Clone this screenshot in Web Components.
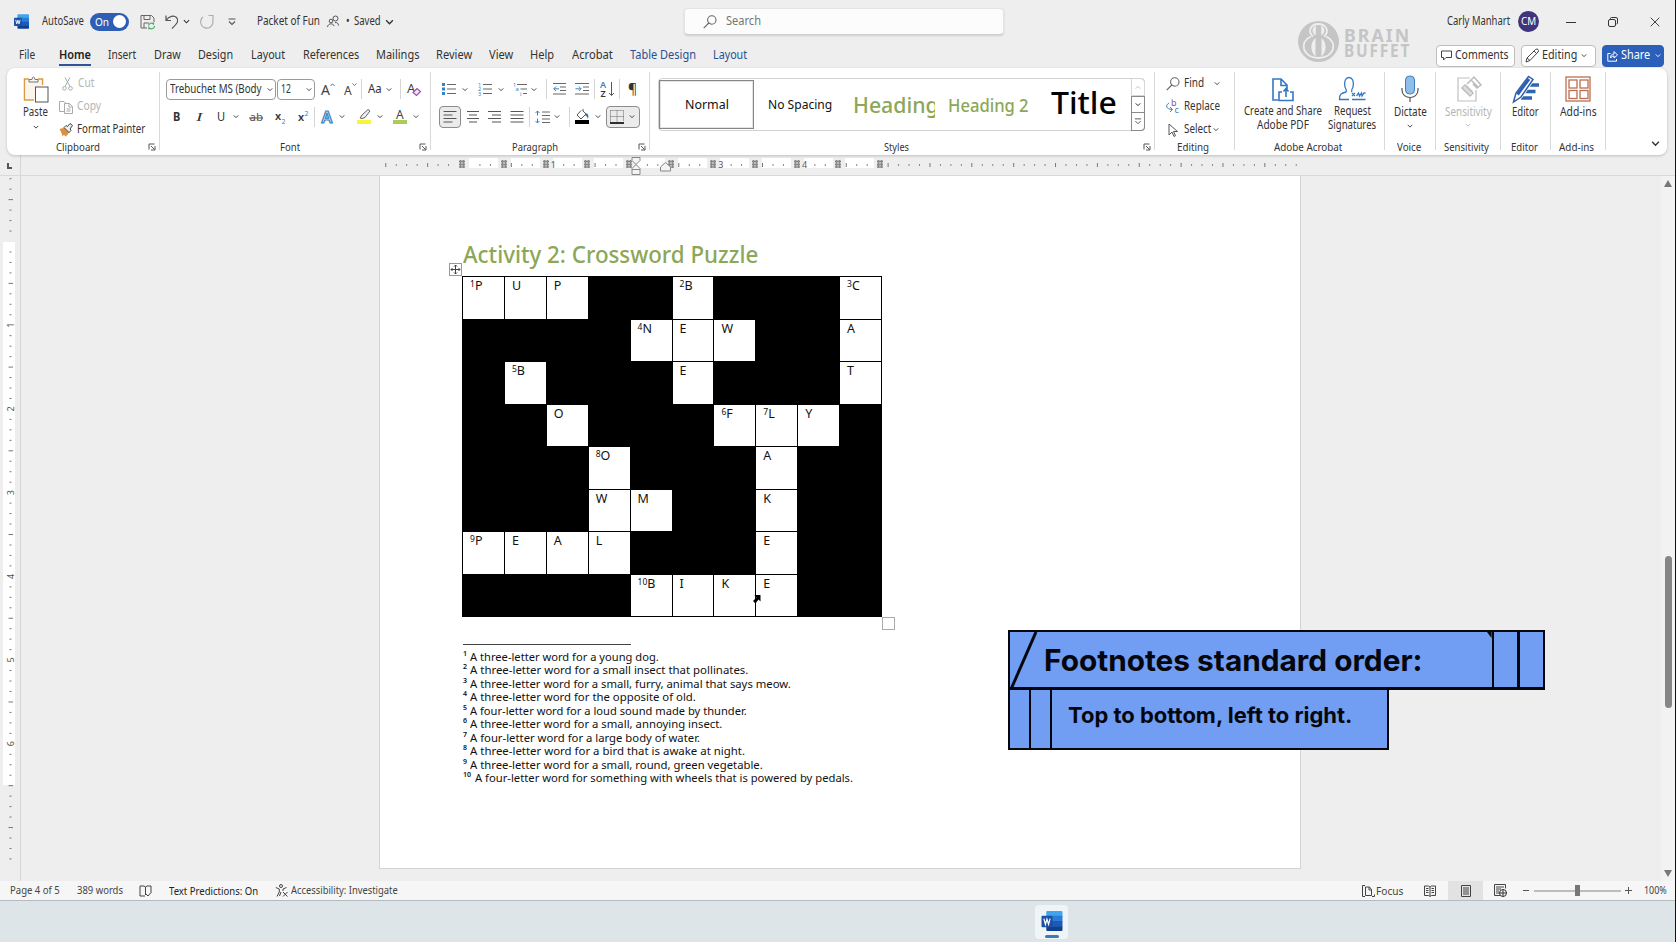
<!DOCTYPE html>
<html lang="en">
  <head>
    <meta charset="UTF-8" />
    <meta name="viewport" content="width=device-width, initial-scale=1.0" />
    <title>Packet of Fun</title>
    <style>
      body {
        margin: 0;
        width: 1676px;
        height: 942px;
        overflow: hidden;
        background: #eeeeee;
        font: 12px/1.2 "Noto Sans", "Open Sans", sans-serif;
        color: #333;
      }
    </style>
  </head>
  <body>
    <word-app></word-app>

    <template id="title-bar">
      <style>
        :host { display: flex; align-items: center; box-sizing: border-box; height: 42px; padding: 1px 0 0 14px; }
        .toggle { display: flex; align-items: center; box-sizing: border-box; width: 39px; height: 18px; margin-left: 6px; padding: 0 3px 0 5px; border-radius: 9px; background: #2f5fb5; color: #fff; justify-content: space-between; }
        .knob { width: 13px; height: 13px; border-radius: 50%; background: #fff; }
        .search { display: flex; align-items: center; box-sizing: border-box; width: 320px; height: 27px; margin-left: 290px; padding-left: 18px; background: #fcfcfc; border: 1px solid #e3e3e3; border-bottom: 1px solid #cfcfcf; border-radius: 4px; box-shadow: 0 1px 2px #0002; color: #767676; }
        .avatar { display: flex; align-items: center; justify-content: center; width: 21px; height: 21px; margin-left: 8px; border-radius: 50%; background: #40357c; color: #fff; }
      </style>
      <ui-icon name="word" w="15" h="15"></ui-icon>
      <fit-text g="13" w="42">AutoSave</fit-text>
      <div class="toggle"><fit-text w="14" size="11.5">On</fit-text><div class="knob"></div></div>
      <ui-icon g="11" name="save" w="15" h="16"></ui-icon>
      <ui-icon g="10" name="undo" w="14" h="16"></ui-icon>
      <ui-icon g="4" name="chev" w="7" h="5"></ui-icon>
      <ui-icon g="9" name="redo" w="15" h="16"></ui-icon>
      <ui-icon g="14" name="more" w="8" h="8"></ui-icon>
      <fit-text g="21" w="63">Packet of Fun</fit-text>
      <ui-icon g="7" name="people" w="12" h="13"></ui-icon>
      <fit-text g="7" w="4">•</fit-text>
      <fit-text g="4" w="27">Saved</fit-text>
      <ui-icon g="4" name="chev" w="9" h="6"></ui-icon>
      <div class="search"><ui-icon name="search" w="14" h="14"></ui-icon><fit-text g="9" w="35">Search</fit-text></div>
      <fit-text g="443" w="63">Carly Manhart</fit-text>
      <div class="avatar"><fit-text w="15" size="10.5">CM</fit-text></div>
      <ui-icon g="27" name="min" w="10" h="10"></ui-icon>
      <ui-icon g="32" name="restore" w="10" h="10"></ui-icon>
      <ui-icon g="32" name="close" w="10" h="10"></ui-icon>
    </template>

    <template id="brand-mark">
      <style>
        :host { display: flex; align-items: center; position: absolute; left: 1298px; top: 21px; color: #c5c5c5; }
        div { margin: 3px 0 0 5px; font-weight: 700; }
      </style>
      <ui-icon name="brain" w="41" h="41"></ui-icon>
      <div>
        <fit-text w="67" h="16" size="17.5" space="2">BRAIN</fit-text>
        <fit-text w="67" h="16" size="17" space="2">BUFFET</fit-text>
      </div>
    </template>

    <template id="tab-bar">
      <style>
        :host { display: flex; align-items: center; box-sizing: border-box; height: 26px; padding: 1px 0 0 19px; }
        .home { font-weight: 600; border-bottom: 2px solid #2f5597; margin: 3px 0 0 24px; padding-bottom: 1px; color: #222; }
        .blue { color: #2b4f8f; }
        .btn { display: flex; align-items: center; box-sizing: border-box; height: 22px; background: #fff; border: 1px solid #bdbdbd; border-radius: 4px; }
        .share { background: #2c5fb9; border-color: #2c5fb9; color: #fff; }
      </style>
      <fit-text w="16">File</fit-text>
      <div class="home"><fit-text w="32">Home</fit-text></div>
      <fit-text g="17" w="28">Insert</fit-text>
      <fit-text g="18" w="27">Draw</fit-text>
      <fit-text g="17" w="35">Design</fit-text>
      <fit-text g="18" w="34">Layout</fit-text>
      <fit-text g="18" w="56">References</fit-text>
      <fit-text g="17" w="43">Mailings</fit-text>
      <fit-text g="17" w="36">Review</fit-text>
      <fit-text g="17" w="24">View</fit-text>
      <fit-text g="17" w="24">Help</fit-text>
      <fit-text g="18" w="41">Acrobat</fit-text>
      <fit-text class="blue" g="17" w="66">Table Design</fit-text>
      <fit-text class="blue" g="17" w="34">Layout</fit-text>
      <div class="btn" style="width: 79px; margin-left: 689px; padding-left: 4px"><ui-icon name="comment" w="11" h="11"></ui-icon><fit-text g="3" w="54">Comments</fit-text></div>
      <div class="btn" style="width: 75px; margin-left: 6px; padding-left: 3px"><ui-icon name="pencil" w="14" h="15"></ui-icon><fit-text g="3" w="35">Editing</fit-text><ui-icon g="4" name="chev" w="6" h="5"></ui-icon></div>
      <div class="btn share" style="width: 62px; margin-left: 6px; padding-left: 4px"><ui-icon name="share" w="11" h="12"></ui-icon><fit-text g="3" w="29">Share</fit-text><ui-icon g="5" name="chev" w="6" h="5"></ui-icon></div>
    </template>

    <template id="ribbon-group">
      <style>
        :host { display: block; box-sizing: border-box; flex: none; height: 78px; margin-top: 4px; border-right: 1px solid #d9d9d9; }
        .body { display: flow-root; height: 71px; }
        .foot { display: flex; align-items: center; height: 8px; padding-right: 3px; }
        .label { flex: 1; display: flex; justify-content: center; }
      </style>
      <div class="body"><slot></slot></div>
      <div class="foot"><div class="label"></div></div>
    </template>

    <template id="ribbon-bar">
      <style>
        :host { display: flex; box-sizing: border-box; height: 87px; margin: 0 8px 0 7px; background: #fff; border-radius: 8px; box-shadow: 0 1px 3px #0003; position: relative; }
        .row { display: flex; align-items: center; }
        .col { display: flex; flex-direction: column; align-items: center; }
        .rows { padding-top: 6px; display: grid; grid-template-rows: 22px 22px; gap: 6px; }
        .dis { color: #b5b5b5; }
        .sep { width: 1px; height: 20px; background: #d5d5d5; }
        .combo { display: flex; align-items: center; box-sizing: border-box; height: 21px; border: 1px solid #9a9a9a; border-radius: 4px; padding-left: 3px; }
        .on { display: flex; align-items: center; box-sizing: border-box; height: 22px; background: #ebebeb; border: 1px solid #8c8c8c; border-radius: 4px; padding-left: 3px; }
        .gallery { display: flex; align-items: center; box-sizing: border-box; height: 53px; width: 487px; margin: 6px 0 0 8px; border: 1px solid #d2d2d2; border-radius: 4px; color: #111; }
        .cell { display: flex; align-items: center; justify-content: center; box-sizing: border-box; height: 49px; width: 95px; border: 1.5px solid #868686; box-shadow: inset 0 0 0 1px #e4e4e4; }
        .green { color: #8ca757; font-weight: 500; }
        .clip { overflow: hidden; }
        .spin { display: grid; grid-template-rows: 18px 17px 18px; width: 14px; margin: -1px -1px -1px auto; }
        .spin div { display: flex; align-items: center; justify-content: center; box-sizing: border-box; border: 1px solid #8a8a8a; }
        .spin div:first-child { border: 1px solid #d6d6d6; color: #bbb; border-radius: 0 4px 0 0; }
        .spin div:last-child { border-radius: 0 0 4px 0; border-top: 0; }
      </style>
      <ribbon-group label="Clipboard" lw="44" width="153" launcher>
        <div class="row" style="align-items: flex-start">
          <div class="col" style="margin: 4px 0 0 15px; width: 27px"><ui-icon name="paste" w="26" h="27"></ui-icon><fit-text w="25" h="18">Paste</fit-text><ui-icon name="chev" w="6" h="12"></ui-icon></div>
          <div style="display: grid; grid-template-rows: repeat(3, 23px); margin-left: 10px">
            <div class="row dis"><ui-icon name="cut" g="3" w="11" h="14"></ui-icon><fit-text g="5" w="16">Cut</fit-text></div>
            <div class="row dis"><ui-icon name="copy" w="14" h="14"></ui-icon><fit-text g="4" w="24">Copy</fit-text></div>
            <div class="row"><ui-icon name="brush" w="14" h="14"></ui-icon><fit-text g="4" w="68">Format Painter</fit-text></div>
          </div>
        </div>
      </ribbon-group>
      <ribbon-group label="Font" lw="20" width="271" launcher>
        <div class="rows">
          <div class="row" style="padding-left: 6px">
            <div class="combo" style="width: 110px"><fit-text w="92">Trebuchet MS (Body</fit-text><ui-icon g="5" name="chev" w="6" h="5"></ui-icon></div>
            <div class="combo" style="width: 38px; margin-left: 1px"><fit-text w="10">12</fit-text><ui-icon g="15" name="chev" w="6" h="5"></ui-icon></div>
            <ui-icon g="6" name="grow" w="14" h="14"></ui-icon>
            <ui-icon g="9" name="shrink" w="13" h="14"></ui-icon>
            <div class="sep" style="margin-left: 4px"></div>
            <fit-text g="6" w="14" size="13">Aa</fit-text>
            <ui-icon g="4" name="chev" w="6" h="5"></ui-icon>
            <div class="sep" style="margin-left: 8px"></div>
            <ui-icon g="6" name="clear" w="14" h="14"></ui-icon>
          </div>
          <div class="row" style="padding-left: 13px; margin-top: -1px">
            <fit-text w="7" size="12.5" style="font-weight: 700">B</fit-text>
            <fit-text g="16" w="6" size="13" style="font-style: italic; font-family: 'Liberation Serif', serif">I</fit-text>
            <fit-text g="15" w="8" size="12.5" style="text-decoration: underline">U</fit-text>
            <ui-icon g="8" name="chev" w="6" h="5"></ui-icon>
            <ui-icon g="10" name="strike" w="14" h="14"></ui-icon>
            <ui-icon g="12" name="sub" w="11" h="14"></ui-icon>
            <ui-icon g="12" name="sup" w="11" h="14"></ui-icon>
            <div class="sep" style="margin-left: 5px"></div>
            <ui-icon g="5" name="outlineA" w="14" h="14"></ui-icon>
            <ui-icon g="5" name="chev" w="6" h="5"></ui-icon>
            <ui-icon g="11" name="marker" w="16" h="15"></ui-icon>
            <ui-icon g="5" name="chev" w="6" h="5"></ui-icon>
            <ui-icon g="10" name="fontA" w="14" h="15"></ui-icon>
            <ui-icon g="6" name="chev" w="6" h="5"></ui-icon>
          </div>
        </div>
      </ribbon-group>
      <ribbon-group label="Paragraph" lw="46" width="219" launcher>
        <div class="rows">
          <div class="row" style="padding-left: 11px">
            <ui-icon name="bullets" w="14" h="14"></ui-icon><ui-icon g="6" name="chev" w="6" h="5"></ui-icon>
            <ui-icon g="10" name="numbers" w="14" h="14"></ui-icon><ui-icon g="6" name="chev" w="6" h="5"></ui-icon>
            <ui-icon g="9" name="multi" w="14" h="14"></ui-icon><ui-icon g="4" name="chev" w="6" h="5"></ui-icon>
            <div class="sep" style="margin-left: 9px"></div>
            <ui-icon g="6" name="outdent" w="13" h="14"></ui-icon>
            <ui-icon g="9" name="indent" w="14" h="14"></ui-icon>
            <div class="sep" style="margin-left: 5px"></div>
            <ui-icon g="5" name="sort" w="15" h="16"></ui-icon>
            <div class="sep" style="margin-left: 4px"></div>
            <fit-text g="8" w="9" size="14">¶</fit-text>
          </div>
          <div class="row" style="padding-left: 8px; margin-top: -1px">
            <div class="on" style="width: 22px"><ui-icon name="left" w="14" h="14"></ui-icon></div>
            <ui-icon g="5" name="center" w="14" h="14"></ui-icon>
            <ui-icon g="8" name="right" w="14" h="14"></ui-icon>
            <ui-icon g="8" name="justify" w="14" h="14"></ui-icon>
            <div class="sep" style="margin-left: 5px"></div>
            <ui-icon g="5" name="spacing" w="15" h="14"></ui-icon>
            <ui-icon g="4" name="chev" w="6" h="5"></ui-icon>
            <div class="sep" style="margin-left: 9px"></div>
            <ui-icon g="5" name="bucket" w="15" h="15"></ui-icon>
            <ui-icon g="5" name="chev" w="6" h="5"></ui-icon>
            <div class="on" style="width: 34px; margin-left: 5px"><ui-icon name="borders" w="14" h="14"></ui-icon><ui-icon g="5" name="chev" w="6" h="5"></ui-icon></div>
          </div>
        </div>
      </ribbon-group>
      <ribbon-group label="Styles" lw="25" width="505" launcher>
        <div class="gallery">
          <div class="cell"><fit-text w="44" size="13">Normal</fit-text></div>
          <fit-text g="14" w="64" size="13">No Spacing</fit-text>
          <div class="green clip" style="width: 82px; margin-left: 21px"><fit-text w="86" h="32" size="22.5">Heading</fit-text></div>
          <fit-text class="green" g="13" w="81" h="30" size="18">Heading 2</fit-text>
          <fit-text g="22" w="66" size="31.5" style="color: #000; font-weight: 500; margin-top: -5px">Title</fit-text>
          <div class="spin"><div><ui-icon name="up" w="6" h="5"></ui-icon></div><div><ui-icon name="chev" w="6" h="5"></ui-icon></div><div><ui-icon name="more" w="8" h="7"></ui-icon></div></div>
        </div>
      </ribbon-group>
      <ribbon-group label="Editing" lw="32" width="80">
        <div style="display: grid; grid-template-rows: repeat(3, 23px); padding-left: 11px">
          <div class="row"><ui-icon name="search" w="14" h="14"></ui-icon><fit-text g="4" w="20">Find</fit-text><ui-icon g="10" name="chev" w="6" h="5"></ui-icon></div>
          <div class="row"><ui-icon name="replace" w="14" h="15"></ui-icon><fit-text g="4" w="36">Replace</fit-text></div>
          <div class="row"><ui-icon name="select" w="14" h="14"></ui-icon><fit-text g="4" w="27">Select</fit-text><ui-icon g="2" name="chev" w="6" h="5"></ui-icon></div>
        </div>
      </ribbon-group>
      <ribbon-group label="Adobe Acrobat" lw="68" width="150">
        <div class="row" style="align-items: flex-start; padding: 3px 0 0 9px">
          <div class="col"><ui-icon name="pdf" w="28" h="29"></ui-icon><fit-text w="78" h="14">Create and Share</fit-text><fit-text w="52" h="14">Adobe PDF</fit-text></div>
          <div class="col" style="margin-left: 6px"><ui-icon name="sign" w="28" h="29"></ui-icon><fit-text w="37" h="14">Request</fit-text><fit-text w="48" h="14">Signatures</fit-text></div>
        </div>
      </ribbon-group>
      <ribbon-group label="Voice" lw="24" width="51">
        <div class="col" style="padding-top: 3px"><ui-icon name="mic" w="28" h="29"></ui-icon><fit-text w="33" h="16">Dictate</fit-text><ui-icon name="chev" w="6" h="12"></ui-icon></div>
      </ribbon-group>
      <ribbon-group label="Sensitivity" lw="45" width="65">
        <div class="col dis" style="padding-top: 3px"><ui-icon name="sens" w="28" h="29"></ui-icon><fit-text w="47" h="15">Sensitivity</fit-text><ui-icon name="chev" w="6" h="12"></ui-icon></div>
      </ribbon-group>
      <ribbon-group label="Editor" lw="27" width="50">
        <div class="col" style="padding-top: 3px"><ui-icon name="editor" w="28" h="29"></ui-icon><fit-text w="27" h="15">Editor</fit-text></div>
      </ribbon-group>
      <ribbon-group label="Add-ins" lw="35" width="55">
        <div class="col" style="padding-top: 3px"><ui-icon name="addins" w="28" h="29"></ui-icon><fit-text w="37" h="15">Add-ins</fit-text></div>
      </ribbon-group>
      <ui-icon name="chev" w="9" h="7" style="margin: 72px 0 0 45px"></ui-icon>
    </template>

    <template id="doc-page">
      <style>
        :host { display: block; box-sizing: border-box; width: 922px; height: 693px; margin-left: 358px; padding: 61px 0 0 82px; background: #fff; border: 1px solid #d4d4d4; border-top: 0; position: relative; color: #111; }
        .title { margin-left: 1px; color: #8ca757; font-weight: 500; }
        .end { width: 11px; height: 11px; margin-left: 420px; border: 1px solid #ababab; background: #fff; }
        .rule { width: 168px; height: 1px; margin: 14px 0 5px 1px; background: #444; }
        .move { position: absolute; left: 69px; top: 87px; }
        .pointer { position: absolute; left: 372px; top: 418px; }
      </style>
      <fit-text class="title" w="295" h="34" size="23">Activity 2: Crossword Puzzle</fit-text>
      <ui-icon class="move" name="move" w="13" h="13"></ui-icon>
      <cross-word></cross-word>
      <div class="end"></div>
      <div class="rule"></div>
      <foot-notes></foot-notes>
      <ui-icon class="pointer" name="pointer" w="9" h="10"></ui-icon>
    </template>

    <template id="callout-banner">
      <style>
        :host { display: block; position: absolute; left: 1008px; top: 630px; color: #05070d; font-family: Inter, sans-serif; }
        .top, .bottom { display: flex; box-sizing: border-box; background: #719df2; border: 2px solid #05070d; }
        .top { width: 537px; height: 60px; border-bottom-width: 3px; }
        .bottom { width: 381px; height: 60px; border-top: 0; }
        .top fit-text { font-weight: 700; width: 443px; padding-top: 11px; }
        .bottom fit-text { font-weight: 700; padding: 12px 0 0 16px; }
        .bar { box-sizing: border-box; border-left: 2px solid #05070d; width: 28px; }
        .bar:last-child { border-left-width: 3px; }
        .bottom .thin { border-left: 0; border-right: 2px solid #05070d; width: 21px; }
        .corner { width: 5px; height: 6px; background: #05070d; clip-path: polygon(0 0, 100% 0, 100% 100%); }
      </style>
      <div class="top">
        <ui-icon name="slash" w="30" h="55"></ui-icon>
        <fit-text g="4" w="378" h="34" size="29.5">Footnotes standard order:</fit-text>
        <div class="corner"></div>
        <div class="bar"></div><div class="bar"></div>
      </div>
      <div class="bottom"><div class="bar thin"></div><div class="bar thin"></div><fit-text w="284" h="27" size="21.5">Top to bottom, left to right.</fit-text></div>
    </template>

    <template id="scroll-bar">
      <style>
        :host { display: flex; flex-direction: column; align-items: center; width: 14px; height: 100%; margin-left: auto; background: #f2f2f2; color: #777; }
        .thumb { width: 7px; height: 152px; margin-top: 369px; border-radius: 4px; background: #868686; }
      </style>
      <ui-icon name="triUp" w="8" h="7" style="margin-top: 4px"></ui-icon>
      <div class="thumb"></div>
      <ui-icon name="triDown" w="8" h="7" style="margin-top: 162px"></ui-icon>
    </template>

    <template id="status-bar">
      <style>
        :host { display: flex; align-items: center; height: 19px; padding-left: 10px; background: #f6f6f6; border-bottom: 1px solid #b4bcc0; font-size: 10.5px; color: #444; }
        .view { display: flex; align-items: center; justify-content: center; height: 19px; width: 35px; background: #e2e2e2; margin-left: 12px; }
        .track { display: flex; align-items: center; justify-content: center; width: 87px; height: 2px; background: #bdbdbd; margin: 0 4px 0 5px; }
        .knob { flex: none; width: 5px; height: 11px; background: #777; }
      </style>
      <fit-text w="50">Page 4 of 5</fit-text>
      <fit-text g="17" w="46">389 words</fit-text>
      <ui-icon g="16" name="proof" w="13" h="12"></ui-icon>
      <fit-text g="17" w="89" style="padding-top: 1px; color: #222">Text Predictions: On</fit-text>
      <ui-icon g="17" name="access" w="13" h="13"></ui-icon>
      <fit-text g="3" w="107">Accessibility: Investigate</fit-text>
      <ui-icon g="964" name="focus" w="13" h="12"></ui-icon>
      <fit-text g="1" w="27" style="padding-top: 1px">Focus</fit-text>
      <ui-icon g="21" name="read" w="12" h="12"></ui-icon>
      <div class="view"><ui-icon name="print" w="10" h="12"></ui-icon></div>
      <ui-icon g="11" name="web" w="13" h="13"></ui-icon>
      <ui-icon g="16" name="minus" w="6" h="7"></ui-icon>
      <div class="track"><div class="knob"></div></div>
      <ui-icon name="plus" w="7" h="7"></ui-icon>
      <fit-text g="12" w="23" >100%</fit-text>
    </template>

    <template id="task-bar">
      <style>
        :host { display: flex; height: 41px; background: #dde5e9; }
        .app { display: flex; flex-direction: column; align-items: center; box-sizing: border-box; width: 33px; height: 34px; margin: 4px 0 0 1035px; padding-top: 6px; border-radius: 4px; background: #eff4f7; }
        .mark { width: 14px; height: 3px; margin-top: 4px; border-radius: 2px; background: #3d7ab5; }
      </style>
      <div class="app"><ui-icon name="word" w="22" h="20"></ui-icon><div class="mark"></div></div>
    </template>

    <template id="word-app">
      <style>
        :host { display: block; box-sizing: border-box; width: 1676px; height: 942px; border-right: 1px solid #111; position: relative; }
        .work { display: flex; height: 706px; border-top: 1px solid #d9d9d9; box-sizing: border-box; }
        h-ruler { height: 20px; }
      </style>
      <title-bar></title-bar>
      <tab-bar></tab-bar>
      <ribbon-bar></ribbon-bar>
      <h-ruler></h-ruler>
      <div class="work">
        <v-ruler></v-ruler>
        <doc-page></doc-page>
        <scroll-bar></scroll-bar>
      </div>
      <status-bar></status-bar>
      <task-bar></task-bar>
      <brand-mark></brand-mark>
      <callout-banner></callout-banner>
    </template>

    <script>
      const line = (d, color = "#555", width = 1) =>
        `<path d="${d}" fill="none" stroke="${color}" stroke-width="${width}"/>`;
      const fill = (d, color) => `<path d="${d}" fill="${color}"/>`;
      const glyph = (x, y, size, color, text, extra = "") =>
        `<text x="${x}" y="${y}" font-size="${size}" fill="${color}" ${extra}>${text}</text>`;
      const blue = "#3b83c0";

      // name: [viewBox width, viewBox height, markup]
      const icons = {
        word: [22, 21, fill("M6 0h15a1 1 0 0 1 1 1v5H5V1a1 1 0 0 1 1-1z", "#41a5ee") + fill("M5 5h17v6H5z", "#2b7cd3") + fill("M5 10.500h17v6H5z", "#185abd") + fill("M5 16h17v4a1 1 0 0 1-1 1H6a1 1 0 0 1-1-1z", "#103f91") + fill("M1 5h9.500a1 1 0 0 1 1 1v10a1 1 0 0 1-1 1H1a1 1 0 0 1-1-1V6a1 1 0 0 1 1-1z", "#1d4fa5") + line("M2.500 8l1.600 6L5.700 8.500 7.400 14 9 8", "#fff", 1.3)],
        chev: [8, 5, line("M1 1l3 3 3-3", "currentColor", 1.2)],
        up: [8, 5, line("M1 4l3-3 3 3", "currentColor", 1.2)],
        more: [8, 8, line("M.5 1h7M1 3.500l3 3 3-3", "#555", 1.1)],
        save: [15, 16, line("M1 1.500h10.500L14 4v4M1 1.500V14h6M4 1.500v4h6v-4M4 14V9h5", "#666") + line("M8.500 11.500a3 3 0 0 1 5-1.500V8.500M14.500 12a3 3 0 0 1-5.500 1.500V15.500", "#4fa868", 1.2)],
        undo: [14, 16, line("M1 1.500V6.500H6M1 6.500C4 2 9 1 11.500 3.500S13 9 7 14.500", "#555", 1.2)],
        redo: [15, 16, line("M9.500 1.500H14V6M13.500 5.500A6.200 6.200 0 1 1 4 3", "#aaa", 1.1)],
        people: [12, 13, `<circle cx="8.500" cy="3.500" r="2.500" fill="none" stroke="#555"/><circle cx="4" cy="6" r="1.800" fill="none" stroke="#555"/>` + line("M.5 12c.5-4 6-4 6.500-1M8 7.500c2.500 0 3.500 1 3.500 3", "#555")],
        search: [14, 14, `<circle cx="8.800" cy="5" r="4.200" fill="none" stroke="#666" stroke-width="1.100"/>` + line("M5.800 8L.7 13.200", "#666", 1.1)],
        min: [10, 10, line("M0 5.500h10", "#333")],
        restore: [10, 10, `<rect x=".5" y="2.500" width="7" height="7" rx="1.500" fill="none" stroke="#333"/>` + line("M2.500 2V1.500q0-1 1-1H8q1.500 0 1.500 1.500v4q0 1-1 1", "#333")],
        close: [10, 10, line("M.7.7l8.600 8.600M9.300.7L.7 9.300", "#444")],
        brain: [41, 41, `<circle cx="20.500" cy="20.500" r="20.500" fill="#c5c5c5"/><g fill="none" stroke="#eee" stroke-width="1.800"><path d="M13 15.500C7 18 4.500 23 6 28c2 6 8 9 14.500 9s12.500-3 14.500-9c1.500-5-1-10-7-12.500"/><path d="M15 15.500C9 10 13 3 20.500 3S32 10 26 15.500"/></g><path d="M17.500 17C12 21 12 31 17.500 35.500zM23.500 17C29 21 29 31 23.500 35.500zM17.800 4.500C13.500 7 13.500 12 17.800 14.500zM23.200 4.500C27.500 7 27.500 12 23.200 14.500z" fill="#eee"/>`],
        comment: [11, 11, line("M.5 1h10v6.500H5L2.500 10V7.500h-2z", "#444")],
        pencil: [14, 15, line("M1 14l1-4L10.500 1.500q1.500-1 2.500 0t0 2.500L5 12.500zM9 3l3 3M2 10l3 2.500", "#444")],
        share: [11, 12, line("M3.500 3.500H.8V11.200H9.500V9M3.500 8C3.500 5 5 4 7 4V1.500L10.500 5 7 8V6C5.500 6 4.500 6.500 3.500 8z", "#fff", 1)],
        launch: [8, 8, line("M1 6.500V1h5.500M3 3l3.500 3.500M7 3v4H3", "#555")],
        paste: [26, 27, line("M6 3H1.500v21H11", "#d99b45", 1.5) + line("M15 3h4.500v6", "#d99b45", 1.500) + fill("M2.500 4h16v7h-6v12h-10z", "#fbf5ea") + `<path d="M6 6V3.500h3Q9.200 1 10.500 1T12 3.500h3V6z" fill="#f5f5f5" stroke="#777"/><rect x="12.500" y="11" width="12.500" height="15" fill="#fff" stroke="#555"/>`],
        cut: [11, 14, line("M3 .5L8 9.500M8 .5L3 9.500", "#aaa") + `<circle cx="2.500" cy="11.300" r="1.800" fill="none" stroke="#aaa"/><circle cx="8.500" cy="11.300" r="1.800" fill="none" stroke="#aaa"/>`],
        copy: [14, 14, line("M5 11.500H.5V1.500H5l2 2M5.500 3.500h5l3 3v7h-8zM10 3.500V7h3.500M7.500 9h4M7.500 11h4", "#aaa")],
        brush: [14, 14, fill("M.5 6L6 4.500l4.500 4.500-3.500 4.500-2-1.500-1.500 1L2.500 10z", "#e0903c") + `<path d="M5 4.500L7 2.500 8.500 3.500 11 .5 13.500 2.500 11 6l1.200 1.200L10 9.500z" fill="#eee" stroke="#444"/>`],
        grow: [14, 14, glyph(0, 13, 14, "#444", "A") + line("M9.500 4L11.500 1.800 13.500 4", blue)],
        shrink: [13, 14, glyph(0, 13, 12, "#444", "A") + line("M8.500 1.500l2 2 2-2", blue)],
        clear: [14, 14, glyph(0, 11, 13, "#444", "A") + `<path d="M6 10.500l4-4 3.500 3-4 4z" fill="#f3e3f6" stroke="#9b4fae" stroke-width="1.200"/>`],
        strike: [14, 14, glyph(.5, 11, 11.5, "#555", "ab") + line("M0 8h14", "#555")],
        sub: [11, 14, glyph(0, 10, 11, "#333", "x", 'font-weight="600"') + glyph(6.500, 13.500, 7, blue, "2")],
        sup: [11, 14, glyph(0, 11, 11, "#333", "x", 'font-weight="600"') + glyph(6.500, 6, 7, blue, "2")],
        outlineA: [14, 14, glyph(1.500, 13, 16, "#d8eaf8", "A", `stroke="${blue}" stroke-width="1.200" font-weight="600"`)],
        marker: [16, 15, fill("M1 11h14v4H1z", "#f8f43c") + `<path d="M4 9l2-3 6-5.500 2 1.500-5 6.500-3 1z" fill="#eee" stroke="#666"/>`],
        fontA: [14, 15, glyph(3, 9.500, 12, "#444", "A") + fill("M0 11h14v4H0z", "#a9cc5b")],
        bullets: [14, 14, fill("M0 1h3v3H0zM0 5.500h3v3H0zM0 10h3v3H0z", blue) + line("M5 2.500h9M5 7h9M5 11.500h9", "#666")],
        numbers: [14, 14, glyph(0, 4.500, 5.500, blue, "1") + glyph(0, 9.200, 5.500, blue, "2") + glyph(0, 14, 5.500, blue, "3") + line("M5 2.500h9M5 7h9M5 11.500h9", "#666")],
        multi: [14, 14, glyph(0, 4.500, 5.500, blue, "1") + glyph(2.500, 9.200, 6, blue, "a") + glyph(7, 14, 6, blue, "i") + line("M4 2.500h10M7.500 7H14M10 11.500h4", "#666")],
        outdent: [13, 14, line("M0 1.500h13M7 5h6M7 8.500h6M0 12h13", "#666") + line("M6 6.800H.8M3 4.500L.8 6.800 3 9", blue)],
        indent: [14, 14, line("M0 1.500h14M8 5h6M8 8.500h6M0 12h14", "#666") + line("M.5 6.800h5.500M3.800 4.500L6 6.800 3.800 9", blue)],
        sort: [15, 16, glyph(0, 7, 9, blue, "A", 'font-weight="600"') + glyph(.5, 15.500, 9, "#333", "Z", 'font-weight="600"') + line("M11.500 1v13.500M9 12l2.500 2.500L14 12", "#555")],
        left: [14, 14, line("M.5 1.500h13M.5 5h9M.5 8.500h13M.5 12h9", "#555")],
        center: [14, 14, line("M1 1.500h12M3 5h8M1 8.500h12M3 12h8", "#555")],
        right: [14, 14, line("M0 1.500h13M4 5h9M0 8.500h13M4 12h9", "#555")],
        justify: [14, 14, line("M.5 1.500h13M.5 5h13M.5 8.500h13M.5 12h13", "#555")],
        spacing: [15, 14, line("M7 2h8M7 5.500h8M7 9h8M7 12.500h8", "#666") + line("M2.500 1v4.500M.5 3l2-2 2 2M2.500 8.500V13M.5 11l2 2 2-2", blue)],
        bucket: [15, 15, fill("M0 11h14v4H0z", "#000") + line("M6 1.500L2 6l4 4 5-5-3-3V0", "#555") + fill("M10 4q4.500 0 3 6-.800-3-3-4z", "#2f6fa8")],
        borders: [14, 14, `<path d="M.5.5h13v11M.5.5v11M7 .5v11M.5 6.500h13" fill="none" stroke="#666" stroke-dasharray="1 1"/>` + line("M0 13h14", "#000", 1.6)],
        replace: [14, 15, glyph(5, 7, 9, "#8d52a8", "b") + glyph(8.500, 14, 9, blue, "c") + line("M3 4C-.5 6-.5 10 6 10.500M4 8l2.500 2.500L4 13", blue)],
        select: [14, 14, line("M3 1v11l3-3 2 4.500 1.500-.8-2-4.200h4z", "#555")],
        pdf: [28, 29, line("M9 25H4V4h8l6 6v4M12 4v6.500h6M13 17h-3v8.500h14V17h-3M17 22v-8M14.500 16.500L17 13.500l2.500 3", "#3478c4", 1.6)],
        sign: [28, 29, line("M11 24.500H1.500C1 19 4 18 8 17c1-1 0-3-1-5C5.500 6 8 2.500 11 2.500S16.500 6 15 12c-1 2-2 4-1 5M14 24.500h13.500M14 18l3 3M17 18l-3 3M18.500 21l2-3 1 3 2-3 .5 3 2-3h1.500", "#3478c4", 1.3)],
        mic: [28, 29, `<rect x="9.500" y="1" width="9" height="18" rx="4" fill="#8fbfe8" stroke="#3d7fbd"/>` + line("M6 13v2c0 10 16 10 16 0v-2M14 22.500V27", "#555", 1.2)],
        sens: [28, 29, line("M16 3H4v23h18V15", "#c0c0c0", 1.2) + fill("M8 14l5-4 6 6-4 4z", "#ddd") + line("M8 13l3-3 8 8-3 3zM13 9L20 2l7 8-4 3-4-4M17 5l7 7", "#bcbcbc", 1.5)],
        editor: [28, 29, line("M13 10h14M11 16.500h12.500M9 23h11", "#2f65b5", 3.5) + `<path d="M1.500 27l2.500-9L16.500 1.500l4.500 3L9 22z" fill="#fff" stroke="#fff" stroke-width="3"/><path d="M1.500 27l2.500-9L16.500 1.500l4.500 3L9 22z" fill="#fff" stroke="#2f5fae" stroke-width="1.500"/>` + line("M17 4L5.500 19.500", "#2f5fae", 3)],
        addins: [28, 29, `<g fill="none" stroke="#bb6f52" stroke-width="1.300"><rect x="2" y="2" width="24" height="24"/><rect x="5" y="5" width="8" height="8"/><rect x="16" y="5" width="8" height="8"/><rect x="5" y="15.500" width="8" height="8"/><rect x="16" y="15.500" width="8" height="8"/></g>`],
        move: [13, 13, `<rect x=".5" y=".5" width="12" height="12" fill="#fff" stroke="#999"/>` + line("M6.500 2v9M2 6.500h9M5 3.500L6.500 2 8 3.500M5 9.500L6.500 11 8 9.500M3.500 5L2 6.500 3.500 8M9.500 5L11 6.500 9.500 8", "#444")],
        pointer: [9, 10, fill("M2.500 1H8.500V7.500L6.500 5.500 3.500 9.500 1 7 4.500 3.500z", "#000")],
        slash: [30, 55, line("M1.500 56L26 0", "#05070d", 3)],
        triUp: [8, 7, fill("M4 0l4 7H0z", "#777")],
        triDown: [8, 7, fill("M4 7l4-7H0z", "#777")],
        proof: [13, 12, line("M6 11H1V1h4l1.500 1L8 1h4v6M6.500 2v8M7 9l2 2 3.500-4", "#444")],
        access: [13, 13, `<circle cx="6" cy="2" r="1.500" fill="none" stroke="#444"/>` + line("M.8 3.500l3.500 1.500v3L2 12.500M11.500 3.500L8 5v2M6 8l-1.500 4M8 8l4.500 4.500M12.500 8L8 12.500", "#444")],
        focus: [13, 12, line("M3 .5H.5v11H3M10 11.500h2.500v-2M3.500 2h4l2 2.500v6h-6zM7 2v3h3", "#444")],
        read: [12, 12, line("M.5 1h4l1.500 1 1.500-1h4v9.500h-4L6 11.500l-1.500-1h-4zM6 2v9M2 3.500h2.500M2 5.500h2.500M2 7.500h2.500M7.500 3.500H10M7.500 5.500H10M7.500 7.500H10", "#444")],
        print: [10, 12, line("M.5.5h9v11h-9zM2 3h6M2 5h6M2 7h6M2 9h6", "#444")],
        web: [13, 13, line("M6 11.500H.5V.5h11v4M2 3h8M2 5h5M2 7h3M2 9h3", "#444") + `<circle cx="9" cy="9" r="3.500" fill="#f6f6f6" stroke="#333"/>` + line("M5.500 9h7M9 5.500v7", "#333")],
        minus: [6, 7, line("M0 3.500h6", "#555")],
        plus: [7, 7, line("M0 3.500h7M3.500 0v7", "#555")],
      };

      class UiIcon extends HTMLElement {
        constructor() {
          super();
          this.attachShadow({ mode: "open" });
        }
        connectedCallback() {
          const [vw, vh, markup] = icons[this.getAttribute("name")];
          const w = this.getAttribute("w");
          const h = this.getAttribute("h");
          if (this.hasAttribute("g")) this.style.marginLeft = this.getAttribute("g") + "px";
          this.shadowRoot.innerHTML = `
            <style>:host { display: block; flex: none; width: ${w}px; height: ${h}px; } svg { display: block; overflow: visible; }</style>
            <svg width="${w}" height="${h}" viewBox="0 0 ${vw} ${vh}">${markup}</svg>`;
        }
      }

      // One line of text squeezed or stretched to the width given in "w".
      class FitText extends HTMLElement {
        constructor() {
          super();
          this.attachShadow({ mode: "open" });
        }
        connectedCallback() {
          const w = Number(this.getAttribute("w"));
          const h = this.getAttribute("h");
          const size = this.getAttribute("size");
          if (this.hasAttribute("g")) this.style.marginLeft = this.getAttribute("g") + "px";
          this.shadowRoot.innerHTML = `
            <style>
              :host { display: block; flex: none; width: ${w}px; ${h ? `line-height: ${h}px;` : ""} ${size ? `font-size: ${size}px;` : ""} }
              span { display: inline-block; white-space: nowrap; transform-origin: 0 50%; letter-spacing: ${this.getAttribute("space") || 0}px; }
            </style>
            <span><slot></slot></span>`;
          const span = this.shadowRoot.querySelector("span");
          span.style.transform = `scaleX(${w / span.offsetWidth})`;
          if (h) this.style.height = h + "px";
        }
      }

      class RibbonGroup extends HTMLElement {
        constructor() {
          super();
          this.attachShadow({ mode: "open" });
          this.shadowRoot.appendChild(document.getElementById("ribbon-group").content.cloneNode(true));
        }
        connectedCallback() {
          this.style.width = this.getAttribute("width") + "px";
          this.shadowRoot.querySelector(".label").innerHTML =
            `<fit-text size="11" w="${this.getAttribute("lw")}">${this.getAttribute("label")}</fit-text>`;
          if (this.hasAttribute("launcher")) {
            this.shadowRoot.querySelector(".foot").insertAdjacentHTML("beforeend", `<ui-icon name="launch" w="8" h="8"></ui-icon>`);
          }
        }
      }

      class HRuler extends HTMLElement {
        constructor() {
          super();
          this.attachShadow({ mode: "open" });
          let out = "";
          // white column segments with the column markers between them
          for (let i = 0; i < 11; i++) {
            const x = Math.round(462 + i * 41.82);
            if (i < 10) out += `<rect x="${x + 7}" y="3" width="29" height="10" fill="#fff"/>`;
            out += `<rect x="${x - 3}" y="5" width="6" height="8" fill="#bbb"/>`;
            out += line(`M${x - 3} 6.500h6M${x - 3} 9.500h6M${x - 3} 12h6M${x - 1.5} 5v8M${x + 1.5} 5v8`, "#888");
          }
          for (let k = -8; k <= 79; k++) {
            const x = 469.5 + k * 10.465;
            if (k === 0 || k === 16 || (k >= -1 && k < 39 && k % 4 === (k < 0 ? -1 : 3))) continue;
            if (k % 8 === 0 && k > 0 && k < 39) out += glyph(x - 2.5, 12.5, 9, "#555", k / 8);
            else if (k % 4 === 0) out += line(`M${x} 8v4`, "#777");
            else out += line(`M${x} 9v2`, "#888");
          }
          out += `<path d="M632 2.500h8v3l-4 4 4 4v6h-8v-6l4-4-4-4zM632 14.500h8M660.500 16v-4l5-4.500 5 4.500v4z" fill="#f4f4f4" stroke="#888"/>`;
          out += line("M8 8v5h4", "#555", 2) + line("M20.500 0v20", "#d6d6d6");
          this.shadowRoot.innerHTML = `<style>:host { display: block; } svg { display: block; }</style><svg width="1675" height="20">${out}</svg>`;
        }
      }

      class VRuler extends HTMLElement {
        constructor() {
          super();
          this.attachShadow({ mode: "open" });
          let out = `<rect x="3" y="66" width="12" height="543" fill="#fff"/>`;
          for (let k = -6; k <= 59; k++) {
            const y = 65.5 + k * 10.465;
            if (k === 0) continue;
            if (k % 8 === 0 && k > 0 && k < 52) out += glyph(0, 0, 9, "#555", k / 8, `transform="translate(13.500 ${y + 2.5}) rotate(-90)"`);
            else if (k % 4 === 0) out += line(`M8.500 ${y}h4.500`, "#777");
            else out += line(`M9.500 ${y}h2`, "#777");
          }
          this.shadowRoot.innerHTML = `<style>:host { display: block; box-sizing: border-box; width: 21px; border-right: 1px solid #d6d6d6; } svg { display: block; }</style><svg width="20" height="705">${out}</svg>`;
        }
      }

      // "#" is a filled square; a number before the letter is its clue.
      const grid = [
        "1P U P # # 2B # # # 3C",
        "# # # # 4N E W # # A",
        "# 5B # # # E # # # T",
        "# # O # # # 6F 7L Y #",
        "# # # 8O # # # A # #",
        "# # # W M # # K # #",
        "9P E A L # # # E # #",
        "# # # # 10B I K E # #",
      ];

      class CrossWord extends HTMLElement {
        constructor() {
          super();
          this.attachShadow({ mode: "open" });
          const cells = grid.join(" ").split(" ").map((c) => {
            if (c === "#") return "<div></div>";
            const [, num, letter] = c.match(/^(\d*)(\w)$/);
            return `<div class="open">${num ? `<sup>${num}</sup>` : ""}${letter}</div>`;
          });
          this.shadowRoot.innerHTML = `
            <style>
              :host { display: grid; box-sizing: border-box; grid-template-columns: repeat(10, 1fr); grid-template-rows: repeat(8, 1fr); gap: 1px; width: 420px; height: 341px; margin-top: 5px; padding: 1px; background: #000; }
              .open { background: #fff; padding-left: 7px; font-size: 12.5px; line-height: 17px; overflow: hidden; min-width: 0; }
              sup { font-size: 8.5px; line-height: 0; vertical-align: 3.5px; }
            </style>${cells.join("")}`;
        }
      }

      const notes = [
        ["A three-letter word for a young dog.", 189],
        ["A three-letter word for a small insect that pollinates.", 278],
        ["A three-letter word for a small, furry, animal that says meow.", 321],
        ["A three-letter word for the opposite of old.", 226],
        ["A four-letter word for a loud sound made by thunder.", 277],
        ["A three-letter word for a small, annoying insect.", 252],
        ["A four-letter word for a large body of water.", 230],
        ["A three-letter word for a bird that is awake at night.", 275],
        ["A three-letter word for a small, round, green vegetable.", 293],
        ["A four-letter word for something with wheels that is powered by pedals.", 378],
      ];

      class FootNotes extends HTMLElement {
        constructor() {
          super();
          this.attachShadow({ mode: "open" });
          this.shadowRoot.innerHTML = `
            <style>
              :host { display: block; padding-left: 1px; font-size: 11.5px; }
              div { display: flex; height: 13.45px; line-height: 13.45px; }
              b { font-size: 7px; font-weight: 600; line-height: 8px; width: 7px; }
              div:last-child b { width: 11.5px; }
            </style>
            ${notes.map(([text, w], i) => `<div><b>${i + 1}</b><fit-text w="${w}">${text}</fit-text></div>`).join("")}`;
        }
      }

      const fromTemplate = (id) =>
        class extends HTMLElement {
          constructor() {
            super();
            this.attachShadow({ mode: "open" });
            this.shadowRoot.appendChild(document.getElementById(id).content.cloneNode(true));
          }
        };

      for (const id of ["word-app", "title-bar", "brand-mark", "tab-bar", "ribbon-bar", "doc-page", "callout-banner", "scroll-bar", "status-bar", "task-bar"]) {
        customElements.define(id, fromTemplate(id));
      }
      customElements.define("ribbon-group", RibbonGroup);
      customElements.define("h-ruler", HRuler);
      customElements.define("v-ruler", VRuler);
      customElements.define("cross-word", CrossWord);
      customElements.define("foot-notes", FootNotes);
      customElements.define("ui-icon", UiIcon);
      customElements.define("fit-text", FitText);
    </script>
  </body>
</html>
